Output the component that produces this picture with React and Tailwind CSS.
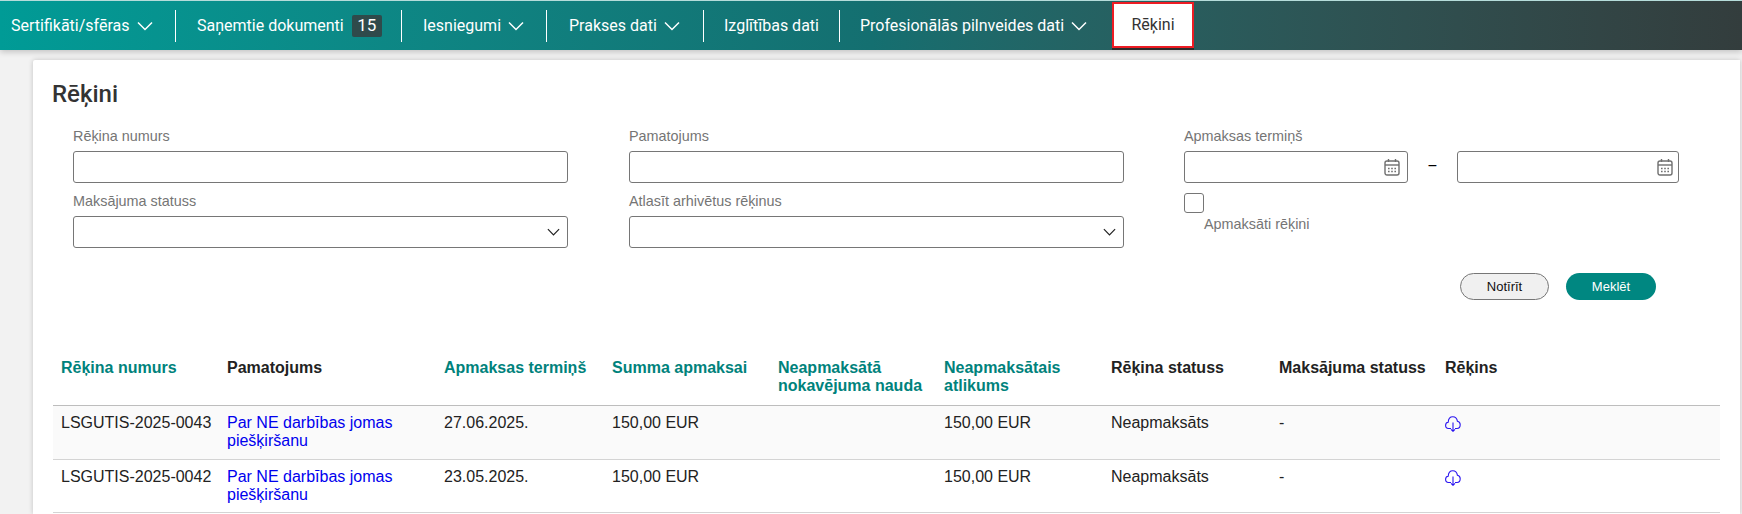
import React from 'react';

const navItems = [
  { label: 'Sertifikāti/sfēras', chevron: true, width: 'w-[176px]', pad: 'pl-[11px]' },
  { label: 'Saņemtie dokumenti', badge: '15', width: 'w-[226px]', pad: 'pl-[21px]' },
  { label: 'Iesniegumi', chevron: true, width: 'w-[145px]', pad: 'pl-[21px]' },
  { label: 'Prakses dati', chevron: true, width: 'w-[157px]', pad: 'pl-[22px]' },
  { label: 'Izglītības dati', width: 'w-[136px]', pad: 'pl-[20px]' },
  { label: 'Profesionālās pilnveides dati', chevron: true, width: 'w-[272px]', pad: 'pl-[20px]', last: true },
];

const columns = [
  { label: 'Rēķina numurs', sort: true, width: 'w-[166px]' },
  { label: 'Pamatojums', width: 'w-[217px]' },
  { label: 'Apmaksas termiņš', sort: true, width: 'w-[168px]' },
  { label: 'Summa apmaksai', sort: true, width: 'w-[166px]' },
  { label: 'Neapmaksātā nokavējuma nauda', sort: true, width: 'w-[166px]' },
  { label: 'Neapmaksātais atlikums', sort: true, width: 'w-[167px]' },
  { label: 'Rēķina statuss', width: 'w-[168px]' },
  { label: 'Maksājuma statuss', width: 'w-[166px]' },
  { label: 'Rēķins' },
];

const rows = [
  { number: 'LSGUTIS-2025-0043', date: '27.06.2025.', shaded: true },
  { number: 'LSGUTIS-2025-0042', date: '23.05.2025.' },
];

const Chevron = ({ className }) => (
  <svg viewBox="0 0 16 10" fill="none" stroke="currentColor" strokeWidth="1.5" className={className}>
    <path d="M1 1.5l7 7 7-7" />
  </svg>
);

const CalendarIcon = ({ className }) => (
  <svg viewBox="0 0 16 18" fill="none" className={`absolute top-[6px] w-[16px] h-[18px] text-[#6f6f6f] ${className}`}>
    <rect x="1" y="3" width="14" height="14" rx="2" stroke="currentColor" strokeWidth="1.4" />
    <path d="M1 7h14" stroke="currentColor" strokeWidth="1.4" />
    <path d="M4.5 1v3M11.5 1v3" stroke="currentColor" strokeWidth="1.4" />
    <path d="M4 10.500h1.600M7.200 10.500h1.600M10.400 10.500h1.600M4 13.500h1.600M7.200 13.500h1.600M10.400 13.500h1.600" stroke="currentColor" strokeWidth="1.4" />
  </svg>
);

const CloudIcon = () => (
  <svg viewBox="0 0 16 16" fill="none" stroke="#2a14f0" strokeWidth="1.1" className="w-[16px] h-[16px]">
    <path d="M6 12.500H3.500C1.500 12.500.6 11 .6 9.300.6 7.600 1.800 6.300 3.200 6.200 3.400 3 5.400.8 7.800.8 10.200.8 12 2.800 12.400 5.200 14 5.400 15.200 7 15.200 8.800 15.200 10.800 14 12.500 12 12.500H10" />
    <path d="M8 6.500v8.800M6 13.300l2 2 2-2" />
  </svg>
);

const Field = ({ label, children }) => (
  <div className="w-[495px]">
    <label className="block font-['Liberation_Sans',sans-serif] text-[14.4px] leading-[20px] text-[#757575] mb-[5px]">{label}</label>
    {children}
  </div>
);

const inputClass = 'block w-full h-[32px] bg-white border border-[#767676] rounded-[3px]';

const Select = () => (
  <div className={`${inputClass} relative`}>
    <Chevron className="absolute right-[7px] top-[11px] w-[13px] h-[8px] text-[#222]" />
  </div>
);

const App = () => {
  return (
    <div className="h-[514px] overflow-hidden bg-[#f2f2f2] font-['Roboto',sans-serif]">
      <nav className="h-[50px] flex items-stretch bg-gradient-to-r from-[#009b96] via-[#146f70] to-[#333d3d] border-t border-[#b5dcda] shadow-[0_2px_6px_rgba(0,0,0,0.2)]">
        {navItems.map((item) => (
          <div key={item.label} className={`${item.width} ${item.pad} shrink-0 flex items-center text-white text-[16px]`}>
            <div className={`w-full h-[32px] flex items-center gap-[7px] ${item.last ? '' : 'border-r border-white'}`}>
              <span>{item.label}</span>
              {item.chevron && <Chevron className="w-[16px] h-[10px]" />}
              {item.badge && (
                <span className="ml-[1px] w-[30px] h-[22px] flex items-center justify-center rounded-[2px] bg-[#2f4a4b] text-[17px]">
                  {item.badge}
                </span>
              )}
            </div>
          </div>
        ))}
        <div className="w-[82px] h-[46px] mt-[1px] flex items-center justify-center bg-white border-2 border-[#ed1c24] text-[#333] text-[16px] shadow-[0_2px_0_#2c2c2c]">
          Rēķini
        </div>
      </nav>

      <main className="ml-[33px] mr-[2px] mt-[10px] h-[454px] bg-white shadow-[0_0_5px_rgba(0,0,0,0.2)] rounded-tl-[2px]">
        <h1 className="pl-[19px] pt-[20px] text-[24px] leading-[28px] font-medium text-[#333]">Rēķini</h1>

        <form className="ml-[40px] mt-[18px] grid grid-cols-[556px_555px_495px] gap-y-[8px]">
          <Field label="Rēķina numurs"><input className={inputClass} /></Field>
          <Field label="Pamatojums"><input className={inputClass} /></Field>
          <Field label="Apmaksas termiņš">
            <div className="flex items-center">
              <div className={`${inputClass} relative !w-[224px]`}><CalendarIcon className="right-[7px]" /></div>
              <span className="w-[49px] text-center text-black">–</span>
              <div className={`${inputClass} relative !w-[222px]`}><CalendarIcon className="right-[5px]" /></div>
            </div>
          </Field>
          <Field label="Maksājuma statuss"><Select /></Field>
          <Field label="Atlasīt arhivētus rēķinus"><Select /></Field>
          <div className="pt-[2px]">
            <div className="w-[20px] h-[20px] border border-[#767676] rounded-[3px]" />
            <div className="ml-[20px] mt-[1px] font-['Liberation_Sans',sans-serif] text-[14.4px] leading-[20px] text-[#757575]">Apmaksāti rēķini</div>
          </div>
        </form>

        <div className="ml-[1427px] mt-[25px] flex gap-[17px] font-['Liberation_Sans',sans-serif] text-[13px]">
          <button className="w-[89px] h-[27px] rounded-full bg-[#f0f0f0] border border-[#767676] text-[#111]">Notīrīt</button>
          <button className="w-[90px] h-[27px] rounded-full bg-[#008781] text-white">Meklēt</button>
        </div>

        <table className="ml-[20px] mt-[30px] w-[1667px] table-fixed border-collapse font-['Liberation_Sans',sans-serif] text-[16px]">
          <thead>
            <tr className="h-[75px] border-b border-[#bdbdbd]">
              {columns.map((col) => (
                <th
                  key={col.label}
                  className={`${col.width ?? ''} px-[8px] pt-[29px] align-top text-left font-bold text-[16px] leading-[18px] ${col.sort ? 'text-[#00827c]' : 'text-[#222]'}`}
                >
                  {col.label}
                </th>
              ))}
            </tr>
          </thead>
          <tbody>
            {rows.map((row) => (
              <tr key={row.number} className={`border-b border-[#d4d4d4] align-top text-[#222] ${row.shaded ? 'h-[54px] bg-[#fafafa]' : 'h-[53px]'}`}>
                <td className="px-[8px] pt-[8px] leading-[18px] whitespace-nowrap">{row.number}</td>
                <td className="px-[8px] pt-[8px] leading-[18px]"><a href="#" className="text-[#0000ee]">Par NE darbības jomas piešķiršanu</a></td>
                <td className="px-[8px] pt-[8px] leading-[18px]">{row.date}</td>
                <td className="px-[8px] pt-[8px] leading-[18px]">150,00 EUR</td>
                <td className="px-[8px] pt-[8px] leading-[18px]"></td>
                <td className="px-[8px] pt-[8px] leading-[18px]">150,00 EUR</td>
                <td className="px-[8px] pt-[8px] leading-[18px]">Neapmaksāts</td>
                <td className="px-[8px] pt-[8px] leading-[18px]">-</td>
                <td className="px-[8px] pt-[10px]"><CloudIcon /></td>
              </tr>
            ))}
          </tbody>
        </table>
      </main>
    </div>
  );
};

export default App;
